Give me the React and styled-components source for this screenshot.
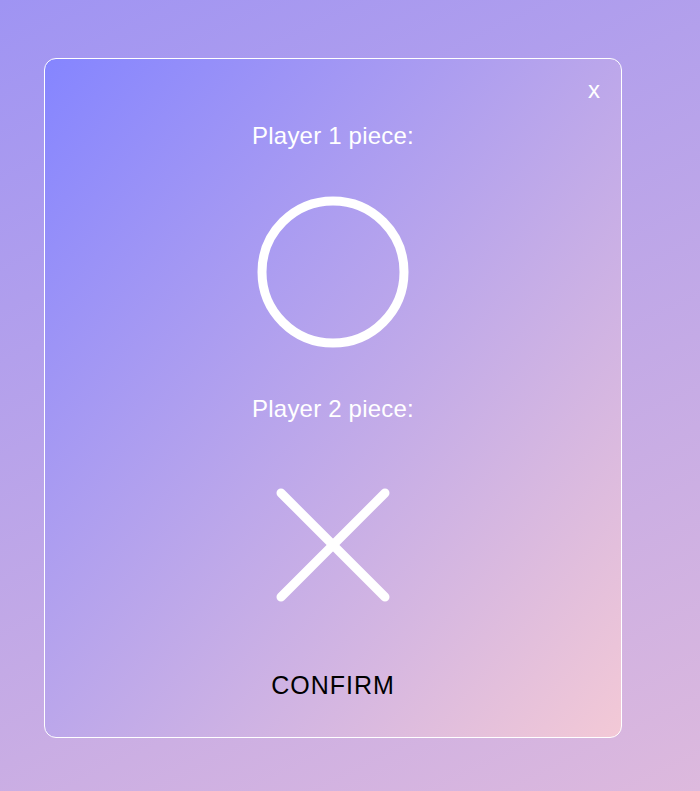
import React from 'react';
import styled, { createGlobalStyle } from 'styled-components';

const GlobalStyle = createGlobalStyle`
  html, body {
    margin: 0;
    padding: 0;
  }
  body {
    min-height: 791px;
    background: linear-gradient(154deg, #9f94f3, #ddb9dd);
    font-family: "Liberation Sans", Arial, sans-serif;
  }
`;

const Page = styled.div`
  padding: 58px 0 0 44px;
`;

const Modal = styled.div`
  position: relative;
  box-sizing: border-box;
  width: 578px;
  height: 680px;
  border: 1px solid #ffffff;
  border-radius: 12px;
  background: linear-gradient(to bottom right, #8585ff, #f3c9d6);
  display: flex;
  flex-direction: column;
  align-items: center;
  padding-top: 63px;
`;

const CloseButton = styled.button`
  position: absolute;
  top: 17px;
  right: 21px;
  background: none;
  border: none;
  padding: 0;
  color: #ffffff;
  font-family: "Liberation Sans", Arial, sans-serif;
  font-size: 24px;
  cursor: pointer;
`;

const Label = styled.div`
  color: #ffffff;
  font-size: 24px;
  letter-spacing: 0.2px;
  margin-top: ${p => p.$top || 0}px;
`;

const Piece = styled.svg`
  display: block;
  margin-top: ${p => p.$top}px;
`;

const Confirm = styled.button`
  margin-top: 69px;
  background: none;
  border: none;
  padding: 0;
  color: #000000;
  font-family: "Liberation Sans", Arial, sans-serif;
  font-size: 25px;
  letter-spacing: 1px;
  cursor: pointer;
`;

const Circle = () => (
  <Piece $top={46} width="152" height="152" viewBox="0 0 152 152">
    <circle cx="76" cy="76" r="71" fill="none" stroke="#fff" strokeWidth="9" />
  </Piece>
);

const Cross = () => (
  <Piece $top={65} width="114" height="114" viewBox="0 0 114 114">
    <g stroke="#fff" strokeWidth="9" strokeLinecap="round">
      <line x1="5" y1="5" x2="109" y2="109" />
      <line x1="109" y1="5" x2="5" y2="109" />
    </g>
  </Piece>
);

export default function App() {
  return (
    <>
      <GlobalStyle />
      <Page>
        <Modal>
          <CloseButton>x</CloseButton>
          <Label>Player 1 piece:</Label>
          <Circle />
          <Label $top={47}>Player 2 piece:</Label>
          <Cross />
          <Confirm>CONFIRM</Confirm>
        </Modal>
      </Page>
    </>
  );
}
